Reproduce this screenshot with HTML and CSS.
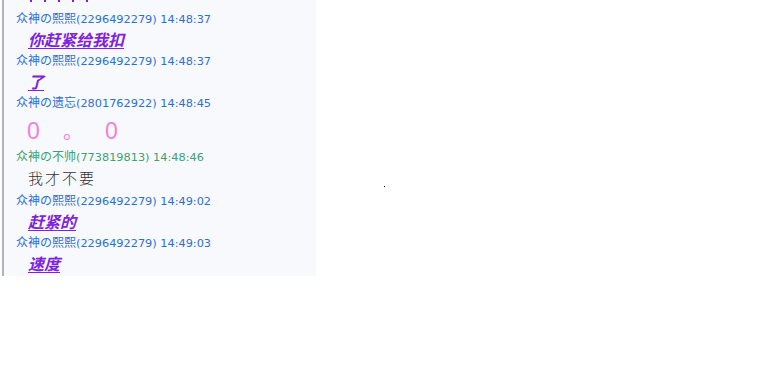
FILE: index.html
```html
<!DOCTYPE html>
<html>
<head>
<meta charset="utf-8">
<link rel="stylesheet" href="styles.css">
</head>
<body>
<div class="panel">
  <div class="dots"><span></span><span></span><span></span><span></span><span></span></div>
  <div class="hdr blue"><span class="nm">众神の熙熙</span>(2296492279) 14:48:37</div>
  <div class="msg purple"><u>你赶紧给我扣</u></div>
  <div class="hdr blue"><span class="nm">众神の熙熙</span>(2296492279) 14:48:37</div>
  <div class="msg purple"><u>了</u></div>
  <div class="hdr blue"><span class="nm">众神の遗忘</span>(2801762922) 14:48:45</div>
  <div class="msg pink"><span class="z1">0</span><span class="dot">。</span><span class="z2">0</span></div>
  <div class="hdr green"><span class="nm">众神の不帅</span>(773819813) 14:48:46</div>
  <div class="msg plain">我才不要</div>
  <div class="hdr blue"><span class="nm">众神の熙熙</span>(2296492279) 14:49:02</div>
  <div class="msg purple"><u>赶紧的</u></div>
  <div class="hdr blue"><span class="nm">众神の熙熙</span>(2296492279) 14:49:03</div>
  <div class="msg purple"><u>速度</u></div>
</div>
<div class="speck"></div>
</body>
</html>
```
FILE: styles.css
```css
html, body {
  margin: 0;
  padding: 0;
  background: #ffffff;
}
body {
  position: relative;
  width: 771px;
  height: 374px;
  overflow: hidden;
}
.panel {
  margin-left: 2px;
  width: 314px;
  height: 276px;
  border-left: 2px solid #b4b4b4;
  background: #f8f9fc;
  padding-left: 12px;
  box-sizing: border-box;
  font-family: "Liberation Sans", "Noto Sans CJK SC", sans-serif;
  overflow: hidden;
}
.dots {
  height: 8px;
  display: flex;
  gap: 12px;
  padding-left: 14px;
  align-items: flex-start;
}
.dots span {
  width: 2px;
  height: 2px;
  background: #7a1fe0;
}
.hdr {
  font-family: "DejaVu Sans", sans-serif;
  font-size: 11.3px;
  line-height: 20px;
  height: 20px;
  white-space: nowrap;
}
.hdr .nm {
  font-family: "Noto Sans CJK SC", sans-serif;
  font-size: 12px;
}
.blue { color: #2a6fd6; }
.green { color: #3f9f70; }
.msg {
  padding-left: 12px;
  white-space: nowrap;
}
.purple {
  color: #7e22e0;
  font-size: 16px;
  font-weight: bold;
  font-style: italic;
  line-height: 22px;
  height: 22px;
  padding-top: 2px;
  box-sizing: border-box;
}
.purple u {
  text-underline-offset: 2px;
}
.pink {
  color: #f080dc;
  font-size: 23px;
  line-height: 34px;
  height: 34px;
  padding-top: 2px;
  box-sizing: border-box;
  display: flex;
  padding-left: 11px;
}
.pink .z1 {
  width: 36px;
}
.pink .dot {
  width: 42px;
  font-family: "Noto Sans CJK SC", sans-serif;
  font-size: 20px;
}
.plain {
  color: #333333;
  font-size: 15px;
  letter-spacing: 2px;
  line-height: 24px;
  height: 24px;
  font-family: "Noto Sans CJK SC", sans-serif;
  font-weight: 300;
}
.speck {
  position: absolute;
  left: 384px;
  top: 186px;
  width: 1px;
  height: 1px;
  background: #000;
}
```
